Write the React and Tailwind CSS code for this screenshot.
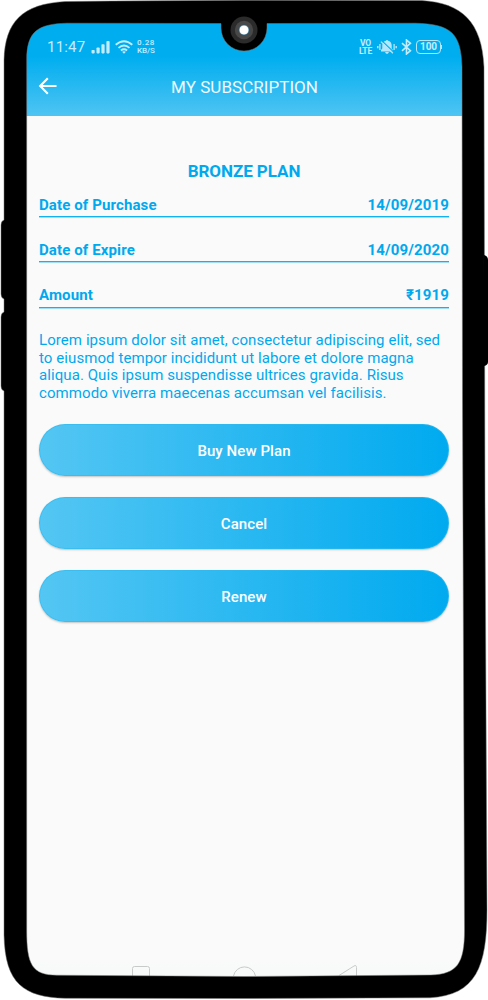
import React from "react";

const details = [
  { label: "Date of Purchase", value: "14/09/2019" },
  { label: "Date of Expire", value: "14/09/2020" },
  { label: "Amount", value: "₹1919" },
];

const actions = ["Buy New Plan", "Cancel", "Renew"];

function SignalIcon() {
  return (
    <svg className="h-[14px] w-[19px]" viewBox="0 0 19 14" fill="#c4ecfd">
      <rect x="0.5" y="10" width="3.2" height="3.4" rx="0.8" />
      <rect x="5.5" y="7.5" width="3.2" height="5.9" rx="0.8" />
      <rect x="10.4" y="4.3" width="3.2" height="9.1" rx="0.8" />
      <rect x="15.4" y="1" width="3.2" height="12.4" rx="0.8" />
    </svg>
  );
}

function WifiIcon() {
  return (
    <svg className="h-[14px] w-[18px]" viewBox="0 0 18 14" fill="none" stroke="#c4ecfd" strokeWidth="1.8">
      <path d="M0.7 4.8Q9-2.4 17.3 4.8" />
      <path d="M3.5 7.9Q9 3.2 14.5 7.9" />
      <path d="M5.9 10.5Q9 8 12.1 10.5" />
      <path d="M7.1 11.8Q9 10.5 10.9 11.8L9 13.8Z" fill="#c4ecfd" stroke="none" />
    </svg>
  );
}

function MutedBellIcon() {
  return (
    <svg className="h-[16px] w-[20px]" viewBox="0 0 20 16">
      <path d="M4 12.4V11L5.3 9.5V6.2C5.3 3.9 6.8 2.1 8.9 1.7C9 .6 11 .6 11.1 1.7C13.2 2.1 14.7 3.9 14.7 6.2V9.5L16 11V12.4ZM8.2 13H11.8C11.8 15.4 8.2 15.4 8.2 13Z" fill="#b5e7fc" />
      <path d="M5 1.9L17 13.4" stroke="#00aeef" strokeWidth="1.3" />
      <path d="M3.9 2.6L15.9 14.3" stroke="#b5e7fc" strokeWidth="1.2" />
      <path d="M2.9 5V11M17.1 5V11" stroke="#b5e7fc" strokeWidth="1.3" />
      <path d="M0.8 7V9.2M19.2 7V9.2" stroke="#b5e7fc" strokeWidth="1.4" />
    </svg>
  );
}

function BluetoothIcon() {
  return (
    <svg className="h-[16px] w-[11px]" viewBox="0 0 11 16" fill="none" stroke="#c4ecfd" strokeWidth="1.6">
      <path d="M1 4.2L9.4 11.7L5.5 15V1L9.4 4.3L1 11.8" />
    </svg>
  );
}

function StatusBar() {
  return (
    <div className="flex h-[34px] items-center pl-[21px] pr-[22px] pt-[13px] text-[#c4ecfd]">
      <span className="w-[39px] whitespace-nowrap text-[15px] leading-4 tracking-[0.2px]">11:47</span>
      <span className="ml-[5px] flex items-center gap-[5px]">
        <SignalIcon />
        <WifiIcon />
      </span>
      <span className="ml-[4px] text-[8px] font-medium leading-[8px]">
        <span className="block tracking-[0.5px]">0.28</span>
        <span className="block tracking-[-0.1px]">KB/S</span>
      </span>
      <span className="ml-auto mr-[5px] text-center text-[8.5px] font-bold leading-[8px] tracking-[-0.2px]">
        VO
        <br />
        LTE
      </span>
      <MutedBellIcon />
      <span className="ml-[4px]">
        <BluetoothIcon />
      </span>
      <span className="ml-[4px] flex h-[14px] w-[25px] items-center justify-center rounded-[4px] border border-[#b5e7fc] text-[10px] font-bold leading-none">
        100
      </span>
      <span className="h-[4px] w-[1px] bg-[#b5e7fc]" />
    </div>
  );
}

function Header() {
  return (
    <header className="h-[93px] bg-[linear-gradient(to_bottom,#00aeef_0px,#00aeef_34px,#4fc4f3_93px)]">
      <StatusBar />
      <div className="grid h-[59px] grid-cols-[40px_1fr_40px] items-center pb-px">
        <svg className="ml-[12px] h-[18px] w-[19px]" viewBox="0 0 19 18" fill="none" stroke="#fff" strokeWidth="2.1">
          <path d="M18.5 9H2.5M9.8 1.2L2.2 9L9.8 16.8" />
        </svg>
        <h1 className="pr-px pt-[2px] text-center text-[17px] font-normal leading-5 tracking-[0.04px] text-[#eefaff]">MY SUBSCRIPTION</h1>
      </div>
    </header>
  );
}

function PhoneFrame() {
  return (
    <svg className="pointer-events-none absolute inset-0 h-[1000px] w-[488px]" viewBox="0 0 488 1000">
      <path
        fill="#000"
        stroke="#777"
        strokeWidth="0.5"
        fillRule="evenodd"
        d="M4 60C5 22 22 4 65 1.5Q160 .5 244 .3Q340 .3 422 .5C462 3 482 22 484 67L485 500L487 910C487 967 476 995 430 997.8L244 998.5L65 998.3C24 997 5 984 4 935V391Q1 390 1 386V317Q1 313 4 312V299Q1 298 1 294V225Q1 221 4 220ZM26.7 60V930C26.7 965 32 975 57 975.2L244 976.5L431 975C457 974 464.5 964 464.5 930L462.5 400L462 67C461 34 452 24 415 23.2L267 23.5V28A23 23 0 0 1 221 28V23.5L67 23.2C38 24 26.7 31 26.7 60Z"
      />
      <path d="M484 255Q488 256 488 260V362Q488 365 484 366Z" fill="#000" />
      <circle cx="244" cy="30" r="13.5" fill="#2b2b2b" />
      <circle cx="244" cy="30" r="9.2" fill="#484848" />
      <circle cx="244" cy="30" r="5" fill="#fff" stroke="#155b80" strokeWidth="0.7" />
    </svg>
  );
}

function NavigationIcons() {
  return (
    <div className="flex h-[13px] items-end justify-center gap-[82px] pr-[1px]">
      <svg className="h-[12px] w-[20px]" viewBox="0 0 20 12" fill="none" stroke="#c8caca">
        <path d="M1.5 12V4.5Q1.5 2.5 3.5 2.5H16.5Q18.5 2.5 18.5 4.5V12" />
      </svg>
      <svg className="h-[12px] w-[24px]" viewBox="0 0 24 12" fill="none" stroke="#c8caca">
        <path d="M.5 12A11.2 11.2 0 0 1 22.5 12" />
      </svg>
      <svg className="h-[12px] w-[20px]" viewBox="0 0 20 12" fill="none" stroke="#c8caca">
        <path d="M0 11.5L15 2Q17.5 .7 17.5 3.5V12" />
      </svg>
    </div>
  );
}

export default function App() {
  return (
    <div className="relative h-[1000px] w-[488px] overflow-hidden bg-white px-[26px] pt-[23px] font-['Roboto','Noto_Sans',sans-serif]">
      <div className="flex h-[953px] w-[438px] flex-col bg-[#fafafa]">
        <Header />
        <main className="flex flex-1 flex-col pl-[13px] pr-[15px] pt-[45px] text-[#00a8ee]">
          <h2 className="text-center text-[17px] font-bold leading-5 tracking-[-0.05px]">BRONZE PLAN</h2>
          <dl>
            {details.map(({ label, value }) => (
              <div key={label} className="mb-[9.3px] flex h-[36px] flex-col justify-end">
                <div className="flex justify-between pb-[1.5px] text-[15px] font-bold leading-5">
                  <dt className="tracking-[0.12px]">{label}</dt>
                  <dd className="tracking-[0.15px]">{value}</dd>
                </div>
                <div className="h-px bg-[#12b2f0] shadow-[0_1px_0_#9edff7]" />
              </div>
            ))}
          </dl>
          <p className="mt-[15.1px] whitespace-nowrap text-[15px] leading-[17.6px] tracking-[0.08px]">
            Lorem ipsum dolor sit amet, consectetur adipiscing elit, sed
            <br />
            to eiusmod tempor incididunt ut labore et dolore magna
            <br />
            aliqua. Quis ipsum suspendisse ultrices gravida. Risus
            <br />
            commodo viverra maecenas accumsan vel facilisis.
          </p>
          <div className="mt-[22px] flex flex-col gap-[21px]">
            {actions.map((action) => (
              <button
                key={action}
                className="h-[52px] rounded-full border border-[#30b9ed]/60 bg-[linear-gradient(to_right,#54c6f3,#00aaef)] bg-origin-border pt-[1px] text-[15px] font-medium tracking-[0.08px] text-white shadow-[0_1px_2px_rgba(0,0,0,0.22)]"
              >
                {action}
              </button>
            ))}
          </div>
        </main>
        <div className="bg-[linear-gradient(to_bottom,#fafafa,#f7faf9)] pt-[10px]">
          <NavigationIcons />
        </div>
      </div>
      <PhoneFrame />
    </div>
  );
}
